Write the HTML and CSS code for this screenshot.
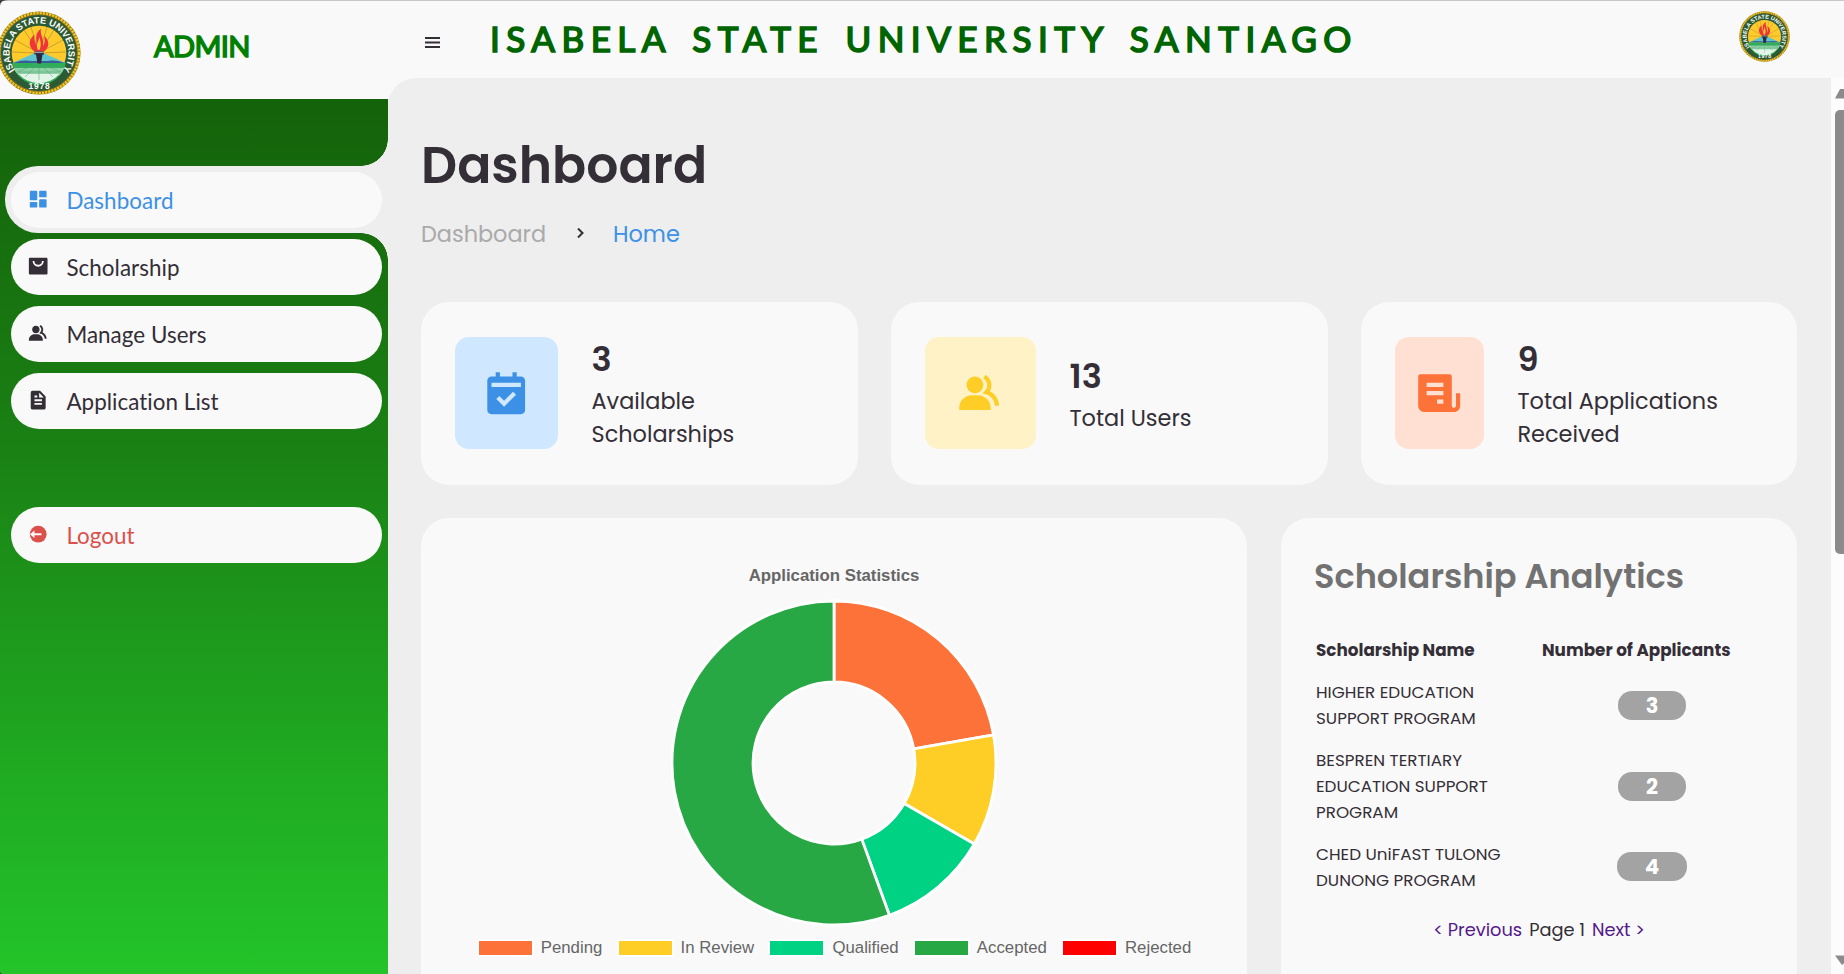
FILE: index.html
```html
<!DOCTYPE html>
<html lang="en">
<head>
<meta charset="utf-8">
<title>Dashboard</title>
<link rel="stylesheet" href="styles.css">
</head>
<body>
<svg class="defs" width="0" height="0">
  <symbol id="seal" viewBox="0 0 84 84">
    <circle cx="42" cy="42" r="41.6" fill="#8a7420"/>
    <circle cx="42" cy="42" r="40" fill="none" stroke="#f3c623" stroke-width="2.6" stroke-dasharray="2.2 1"/>
    <circle cx="42" cy="42" r="38" fill="#2c5a35"/>
    <circle cx="42" cy="42" r="27.3" fill="#ffca2b"/>
    <g stroke="#a8862a" stroke-width=".6">
      <path d="M42 42L15 41M42 42L18 29M42 42L27 19M42 42L34 16M42 42L69 41M42 42L66 29M42 42L57 19M42 42L50 16"/>
    </g>
    <path d="M15.400 52 42 40 68.600 52z" fill="#5cc5cf"/>
    <path d="M16 52q10-3.500 18-2h16q8-1.500 18 2z" fill="#3b5c9a"/>
    <path d="M15.200 52h53.600a27.300 27.300 0 0 1-53.600 0z" fill="#2fae58"/>
    <path d="M16.600 57h50.800q-2 4.500-5 7H21.600q-3-2.500-5-7z" fill="#8fd0a4"/>
    <path d="M21.500 63h41a27.300 27.300 0 0 1-41 0z" fill="#e4f4e8"/>
    <path d="M42 52L28 66M42 52v17M42 52L56 66M42 52L20 61M42 52L64 61M18 56h48M21 61h42" stroke="#4aa77a" stroke-width=".5"/>
    <path d="M37.500 40.500c-7-5-5.500-13 0-17-1 5 1 8 2 11 0-7-2-12 4.500-17-1.500 6 3.500 10 2 18 2-3 2-7 1-11 5.500 5 6 12 0 16z" fill="#f0353a"/>
    <path d="M41 39c-3-5 1-9 1.500-13 1 4 2 9 0 13z" fill="#ffca2b"/>
    <path d="M37.500 40.500h9.500v3h-1.500l-1.500 9h-3.500l-1.500-9h-1.500z" fill="#2d2840"/>
    <path d="M37.500 41.500h9.500" stroke="#9a9aa5" stroke-width="1.200"/>
    <path id="seal-top" d="M18.900 60.300a29.500 29.500 0 1 1 46.200 0" fill="none"/>
    <text class="seal-text"><textPath href="#seal-top" startOffset="50%" textLength="129" text-anchor="middle">ISABELA STATE UNIVERSITY</textPath></text>
    <text class="seal-year" x="42.500" y="77.500" text-anchor="middle">1978</text>
  </symbol>
  <symbol id="i-group" viewBox="0 0 24 24">
    <path d="M9.500 12c2.206 0 4-1.794 4-4s-1.794-4-4-4-4 1.794-4 4 1.794 4 4 4zm1.500 1H8c-3.309 0-6 2.691-6 6v1h15v-1c0-3.309-2.691-6-6-6z"/>
    <path d="M16.604 11.048a5.670 5.670 0 0 0 .751-3.440c-.179-1.784-1.175-3.361-2.803-4.440l-1.105 1.666c1.119.742 1.800 1.799 1.918 2.974a3.693 3.693 0 0 1-1.072 2.986l-1.192 1.192 1.618.475C18.951 13.701 19 17.957 19 18h2c0-1.789-.956-5.285-4.396-6.952z"/>
  </symbol>
</svg>

<aside class="sidebar">
  <div class="brand">
    <svg class="brand-logo"><use href="#seal"/></svg>
    <span class="brand-name">ADMIN</span>
  </div>
  <ul class="menu">
    <li class="menu-item active"><a class="menu-link">
      <svg class="menu-icon" viewBox="0 0 24 24"><path d="M4 13h6a1 1 0 0 0 1-1V4a1 1 0 0 0-1-1H4a1 1 0 0 0-1 1v8a1 1 0 0 0 1 1zm-1 7a1 1 0 0 0 1 1h6a1 1 0 0 0 1-1v-4a1 1 0 0 0-1-1H4a1 1 0 0 0-1 1v4zm10 0a1 1 0 0 0 1 1h6a1 1 0 0 0 1-1v-7a1 1 0 0 0-1-1h-6a1 1 0 0 0-1 1v7zm1-10h6a1 1 0 0 0 1-1V4a1 1 0 0 0-1-1h-6a1 1 0 0 0-1 1v5a1 1 0 0 0 1 1z"/></svg>
      <span>Dashboard</span></a></li>
    <li class="menu-item"><a class="menu-link">
      <svg class="menu-icon" viewBox="0 0 24 24"><rect x="2" y="3" width="20" height="18" rx="1.200"/><path class="cut" d="M7 6.500a5 5 0 0 0 10 0"/></svg>
      <span>Scholarship</span></a></li>
    <li class="menu-item"><a class="menu-link">
      <svg class="menu-icon"><use href="#i-group"/></svg>
      <span>Manage Users</span></a></li>
    <li class="menu-item"><a class="menu-link">
      <svg class="menu-icon" viewBox="0 0 24 24"><path fill-rule="evenodd" d="M6 22h12a2 2 0 0 0 2-2V8l-6-6H6a2 2 0 0 0-2 2v16a2 2 0 0 0 2 2zm7-18 5 5h-5V4zM8 7h3v2H8V7zm0 4h8v2H8v-2zm0 4h8v2H8v-2z"/></svg>
      <span>Application List</span></a></li>
  </ul>
  <ul class="menu menu-bottom">
    <li class="menu-item"><a class="menu-link logout">
      <svg class="menu-icon" viewBox="0 0 24 24"><circle cx="12" cy="12" r="9"/><path fill="#f9f9f9" d="m3 12 5-4v3h7.500v2H8v3z"/></svg>
      <span>Logout</span></a></li>
  </ul>
</aside>

<section class="content">
  <nav class="topbar">
    <svg class="burger" viewBox="0 0 15 11"><path d="M0 1h15M0 5.500h15M0 10h15"/></svg>
    <h1 class="school">ISABELA STATE UNIVERSITY SANTIAGO</h1>
    <svg class="profile"><use href="#seal"/></svg>
  </nav>
  <div class="stage">
    <main class="main">
      <h2 class="page-title">Dashboard</h2>
      <div class="crumbs">
        <span class="crumb-off">Dashboard</span>
        <svg class="crumb-sep" viewBox="0 0 7 10"><path d="M1 .5l4.500 4.500L1 9.500"/></svg>
        <span class="crumb-on">Home</span>
      </div>

      <div class="cards">
        <div class="card">
          <div class="card-icon blue"><svg viewBox="0 0 24 24"><path fill-rule="evenodd" d="M21 20V6c0-1.103-.897-2-2-2h-2V2h-2v2H9V2H7v2H5c-1.103 0-2 .897-2 2v14c0 1.103.897 2 2 2h14c1.103 0 2-.897 2-2zM11 18.414l-3.707-3.707 1.414-1.414L11 15.586l4.293-4.293 1.414 1.414L11 18.414zM19 9H5V7h14v2z"/></svg></div>
          <div class="card-text"><strong>3</strong><span>Available</span><span>Scholarships</span></div>
        </div>
        <div class="card">
          <div class="card-icon yellow"><svg><use href="#i-group"/></svg></div>
          <div class="card-text"><strong>13</strong><span>Total Users</span></div>
        </div>
        <div class="card">
          <div class="card-icon orange"><svg viewBox="0 0 24 24"><path fill-rule="evenodd" d="M17 3H3a1 1 0 0 0-1 1v14c0 1.654 1.346 3 3 3h14c1.654 0 3-1.346 3-3v-6h-2v6a1 1 0 0 1-2 0V4a1 1 0 0 0-1-1zM6 7h8v2H6zm0 4h8v2H6zm5 4h3v2h-3z"/></svg></div>
          <div class="card-text"><strong>9</strong><span>Total Applications</span><span>Received</span></div>
        </div>
      </div>

      <div class="panels">
        <div class="panel chart">
          <div class="chart-title">Application Statistics</div>
          <svg class="donut" viewBox="-164 -164 328 328">
            <g stroke="#fff" stroke-width="2.800">
              <path fill="#fd7238" d="M0-162A162 162 0 0 1 159.540-28.130L79.770-14.070A81 81 0 0 0 0-81z"/>
              <path fill="#ffce26" d="M159.540-28.130A162 162 0 0 1 140.300 81L70.150 40.500A81 81 0 0 0 79.770-14.070z"/>
              <path fill="#00d284" d="M140.300 81A162 162 0 0 1 55.410 152.230L27.700 76.120A81 81 0 0 0 70.150 40.500z"/>
              <path fill="#28a745" d="M55.410 152.230A162 162 0 1 1 0-162V-81A81 81 0 1 0 27.700 76.120z"/>
            </g>
          </svg>
          <div class="legend">
            <span class="key"><i class="c-pending"></i>Pending</span>
            <span class="key"><i class="c-review"></i>In Review</span>
            <span class="key"><i class="c-qualified"></i>Qualified</span>
            <span class="key"><i class="c-accepted"></i>Accepted</span>
            <span class="key"><i class="c-rejected"></i>Rejected</span>
          </div>
        </div>
        <div class="panel analytics">
          <h3 class="panel-title">Scholarship Analytics</h3>
          <div class="grid">
            <div class="th">Scholarship Name</div><div class="th">Number of Applicants</div>
            <div class="td">HIGHER EDUCATION<br>SUPPORT PROGRAM</div><div class="num"><b>3</b></div>
            <div class="td">BESPREN TERTIARY<br>EDUCATION SUPPORT<br>PROGRAM</div><div class="num"><b>2</b></div>
            <div class="td">CHED UniFAST TULONG<br>DUNONG PROGRAM</div><div class="num"><b class="wide">4</b></div>
          </div>
          <div class="pager"><a>&lt; Previous</a><span>Page 1</span><a>Next &gt;</a></div>
        </div>
      </div>
    </main>
    <div class="scrollbar">
      <svg class="arrow" viewBox="0 0 10 10"><path d="M0 9.500 5 0h5v9.500z"/></svg>
      <div class="thumb"></div>
      <svg class="arrow down" viewBox="0 0 10 10"><path d="M0 .5h10V7.500L7 10z"/></svg>
    </div>
  </div>
</section>
<svg class="edge edge-tl" viewBox="0 0 8 8"><path d="M0 0h8Q0 0 0 6z"/></svg>
<svg class="edge edge-bl" viewBox="0 0 4 4"><path d="M0 0Q0 4 4 4H0z"/></svg>
</body>
</html>
```
FILE: styles.css
```css
* { box-sizing: border-box; margin: 0; padding: 0; }
body {
  width: 1844px;
  height: 974px;
  display: flex;
  overflow: hidden;
  background: #f9f9f9;
  color: #342e37;
  font-family: Poppins, Inter, sans-serif;
  box-shadow: inset 0 1px #c8c8c8;
}
.defs { position: absolute; }
.seal-text { font: bold 9.200px "Liberation Sans", sans-serif; fill: #fff; }
.seal-year { font: bold 8.500px "Liberation Sans", sans-serif; fill: #fff; letter-spacing: .800px; }

/* sidebar */
.sidebar { width: 388px; height: 974px; flex: none; display: flex; flex-direction: column; font-family: Lato, sans-serif; }
.brand { height: 99px; flex: none; display: flex; padding-top: 11px; }
.brand-logo { width: 84px; height: 84px; margin-left: -3px; flex: none; }
.brand-name { margin: 17px 0 0 73px; font-size: 29px; line-height: 36px; letter-spacing: -.600px; color: #008000; -webkit-text-stroke: 1.500px #008000; }
.menu { list-style: none; background: linear-gradient(#14620a, #1a8014 100%); padding-top: 67px; height: 341px; }
.menu-item { height: 67px; margin-left: 5px; padding: 6px 6px 5px; border-radius: 33px 0 0 33px; position: relative; }
.menu-bottom { flex: 1; background: linear-gradient(#1a8014, #23c42a); padding-top: 61px; }
.menu-link { height: 56px; display: flex; align-items: center; gap: 17px; padding: 1px 0 0 16px; border-radius: 28px; background: #f9f9f9; font-size: 22.400px; line-height: 30px; letter-spacing: .050px; }
.menu-icon { width: 22.400px; height: 22.400px; fill: currentColor; margin-top: -3px; }
.cut { fill: none; stroke: #f9f9f9; stroke-width: 2; }
.active { background: #eee; }
.active .menu-link { color: #3c91e6; }
.active::before, .active::after { content: ""; position: absolute; right: 0; width: 27px; height: 27px; }
.active::before { top: -27px; background: radial-gradient(circle at 0 0, transparent 26.500px, #eee 27px); }
.active::after { bottom: -27px; background: radial-gradient(circle at 0 100%, transparent 26.500px, #eee 27px); }
.menu-link.logout { color: #db504a; }

/* header */
.content { flex: 1; display: flex; flex-direction: column; }
.topbar { height: 78px; flex: none; display: flex; align-items: flex-start; padding: 0 55px 0 37px; }
.burger { width: 15px; height: 11px; margin-top: 37px; stroke: #342e37; stroke-width: 1.800; }
.school { margin: 16px 0 0 50px; font: 400 35px/44px Lato, sans-serif; letter-spacing: 6.500px; word-spacing: 5.900px; color: #006400; -webkit-text-stroke: 1.700px #006400; white-space: nowrap; }
.profile { width: 51px; height: 51px; margin: 11px 0 0 auto; }
.stage { flex: 1; display: flex; }
.main { width: 1443px; height: 896px; padding: 48px 34px 0 33px; background: #eee; border-radius: 28px 0 0 0; overflow: hidden; }
.scrollbar { flex: 1; padding: 11px 0 9px 4px; display: flex; flex-direction: column; background: #fcfcfc; }
.arrow { width: 10px; height: 10px; fill: #8b8b8b; }
.down { margin-top: auto; }
.thumb { height: 444px; margin-top: 11px; background: #8b8b8b; border-radius: 5px 0 0 5px; }

.page-title { font-size: 50.400px; line-height: 80px; font-weight: 600; }
.crumbs { margin-top: 8px; display: flex; align-items: center; height: 40px; font-size: 22.400px; }
.crumb-off { width: 156px; color: #aaa; }
.crumb-sep { width: 7px; height: 10px; margin: -3px 29px 0 0; fill: none; stroke: #342e37; stroke-width: 2; }
.crumb-on { color: #3c91e6; }

/* summary cards */
.cards { margin-top: 48px; display: grid; grid-template-columns: 437px 437px 436px; gap: 33px; }
.card { height: 183px; padding: 35px 34px; display: flex; gap: 33.500px; border-radius: 28px; background: #f9f9f9; }
.card-icon { width: 103px; height: 112px; border-radius: 14px; display: flex; align-items: center; justify-content: center; }
.card-icon svg { width: 50.400px; height: 50.400px; fill: currentColor; flex: none; }
.blue { background: #cfe8ff; color: #3c91e6; }
.yellow { width: 111px; background: #fff2c6; color: #ffce26; }
.orange { width: 89px; background: #ffe0d3; color: #fd7238; }
.card-text { height: 112px; display: flex; flex-direction: column; justify-content: center; font-size: 22.400px; line-height: 33px; }
.card-text strong { font-size: 33.600px; line-height: 50px; font-weight: 600; }

/* lower panels */
.panels { margin-top: 33px; display: grid; grid-template-columns: 826px 516px; gap: 34px; }
.panel { height: 500px; border-radius: 28px; background: #f9f9f9; }
.chart { display: flex; flex-direction: column; align-items: center; padding-top: 46px; font-family: "Liberation Sans", Arial, sans-serif; color: #666; }
.chart-title { font-size: 16.800px; line-height: 24px; font-weight: 700; }
.donut { width: 328px; height: 328px; margin-top: 11px; }
.legend { display: flex; gap: 14.200px; margin-top: 9px; font-size: 16.800px; line-height: 24px; }
.key { display: flex; align-items: center; gap: 7px; }
.key i { width: 57px; height: 18px; border: 2px solid #fff; }
.c-pending { background: #fd7238; }
.c-review { background: #ffce26; }
.c-qualified { background: #00d284; }
.c-accepted { background: #28a745; }
.c-rejected { background: #f00; }

.analytics { padding: 34px 33px; }
.panel-title { font-size: 33.600px; line-height: 50px; font-weight: 600; color: #727272; }
.grid { margin: 35px 0 0 2px; display: grid; grid-template-columns: 226px 187px; row-gap: 16px; font-size: 16.800px; line-height: 26px; }
.th { font-weight: 700; white-space: nowrap; }
.td { white-space: nowrap; }
.num { display: flex; align-items: center; justify-content: center; padding-left: 33px; }
.num b { width: 68px; height: 29px; border-radius: 14px; background: #a3a3a3; color: #fff; font-size: 21px; line-height: 29px; text-align: center; }
.num .wide { width: 70px; margin-bottom: 2px; }
.pager { margin-top: 24px; display: flex; gap: 7px; justify-content: center; font-size: 17.800px; line-height: 26px; }
.pager a { color: #551a8b; }

.edge { position: absolute; left: 0; fill: #403c3e; }
.edge-tl { top: 0; width: 8px; height: 8px; }
.edge-bl { top: 971px; width: 3px; height: 3px; }
```
